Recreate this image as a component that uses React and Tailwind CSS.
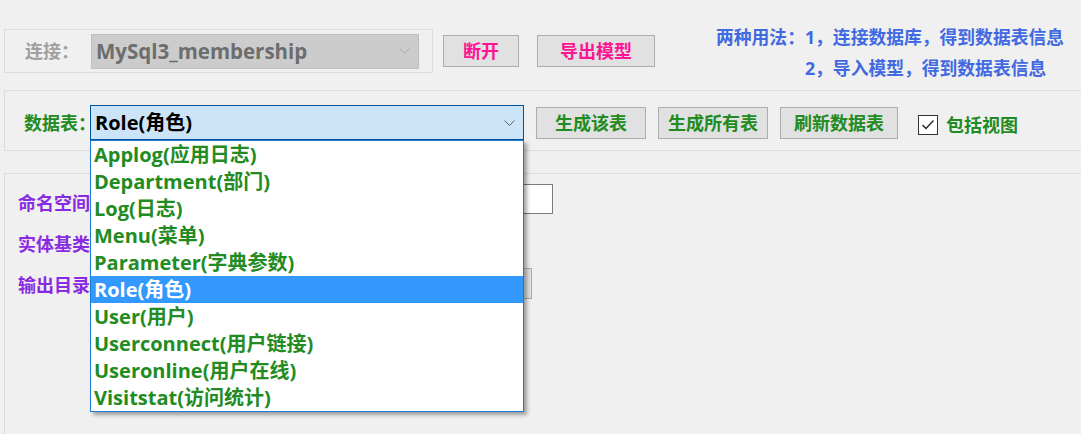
import React from 'react';

const tables = [
  'Applog(应用日志)',
  'Department(部门)',
  'Log(日志)',
  'Menu(菜单)',
  'Parameter(字典参数)',
  'Role(角色)',
  'User(用户)',
  'Userconnect(用户链接)',
  'Useronline(用户在线)',
  'Visitstat(访问统计)',
];

const Chevron = ({ color }) => (
  <svg width="11" height="6" viewBox="0 0 11 6" className="shrink-0">
    <polyline points="0.5,0.5 5.5,5.5 10.5,0.5" fill="none" stroke={color} strokeWidth="1" />
  </svg>
);

const WinButton = ({ label, width, color }) => (
  <button
    className={`${width} h-[32px] shrink-0 bg-[#e1e1e1] border border-[#adadad] flex items-center justify-center text-[18px] font-bold ${color}`}
  >
    {label}
  </button>
);

export default function App() {
  const selected = 'Role(角色)';

  return (
    <div className="w-[1081px] h-[434px] overflow-hidden bg-[#f0f0f0] font-bold font-['Open_Sans','Noto_Sans_CJK_SC',sans-serif] leading-none">
      {/* connection row */}
      <div className="h-[90px] flex items-start">
        <div className="ml-[4px] mt-[29px] w-[429px] h-[44px] shrink-0 border border-[#dcdcdc] flex items-center">
          <span className="ml-[20px] w-[66px] shrink-0 whitespace-nowrap text-[18px] text-[#a0a0a0]">连接：</span>
          <div className="w-[328px] h-[35px] shrink-0 bg-[#cccccc] border border-[#bfbfbf] flex items-center justify-between pl-[4px] pr-[8px]">
            <span className="text-[20.5px] text-[#6d6d6d]">MySql3_membership</span>
            <Chevron color="#a8a8a8" />
          </div>
        </div>
        <div className="ml-[10px] mt-[35px]">
          <WinButton label="断开" width="w-[76px]" color="text-[#ff1493]" />
        </div>
        <div className="ml-[18px] mt-[35px]">
          <WinButton label="导出模型" width="w-[118px]" color="text-[#ff1493]" />
        </div>
        <div className="ml-[61px] mt-[22px] text-[17.8px] leading-[31px] text-[#4169e1] whitespace-nowrap">
          <div>两种用法：1，连接数据库，得到数据表信息</div>
          <div>
            <span className="invisible">两种用法：</span>2，导入模型，得到数据表信息
          </div>
        </div>
      </div>

      {/* table row */}
      <div className="ml-[4px] w-[1100px] h-[61px] border border-[#dcdcdc]">
        <div className="mt-[14px] h-[35px] flex items-center">
          <span className="ml-[19px] w-[66px] shrink-0 whitespace-nowrap text-[18px] text-[#228b22]">数据表：</span>
          <div className="relative w-[434px] h-[35px] shrink-0">
            <div className="h-full bg-[#cce4f7] border border-[#005499] flex items-center justify-between pl-[4px] pr-[8px]">
              <span className="text-[20px] text-black">{selected}</span>
              <Chevron color="#606060" />
            </div>
            <ul className="absolute left-0 top-full z-10 w-full bg-white border border-[#1a7ad4] shadow-[3px_3px_4px_rgba(0,0,0,0.35)]">
              {tables.map((t) => (
                <li
                  key={t}
                  className={`h-[27px] pl-[3px] flex items-center text-[20px] ${
                    t === selected ? 'bg-[#3399ff] text-white' : 'text-[#228b22]'
                  }`}
                >
                  {t}
                </li>
              ))}
            </ul>
          </div>
          <div className="ml-[12px]">
            <WinButton label="生成该表" width="w-[110px]" color="text-[#228b22]" />
          </div>
          <div className="ml-[12px]">
            <WinButton label="生成所有表" width="w-[110px]" color="text-[#228b22]" />
          </div>
          <div className="ml-[12px]">
            <WinButton label="刷新数据表" width="w-[118px]" color="text-[#228b22]" />
          </div>
          <div className="ml-[20px] mt-[5px] w-[20px] h-[20px] shrink-0 bg-white border border-[#333333] flex items-center justify-center">
            <svg width="14" height="12" viewBox="0 0 14 12">
              <polyline points="1.5,6 5,9.5 12.5,1.5" fill="none" stroke="#222" strokeWidth="1.3" />
            </svg>
          </div>
          <span className="ml-[8px] mt-[5px] whitespace-nowrap text-[18px] text-[#228b22]">包括视图</span>
        </div>
      </div>

      {/* settings group */}
      <div className="ml-[4px] mt-[22px] w-[1100px] h-[300px] border border-[#dcdcdc]">
        <div className="mt-[10px] h-[30px] flex items-center">
          <span className="ml-[13px] w-[78px] shrink-0 mt-[7px] whitespace-nowrap text-[18px] text-[#8a2be2]">命名空间</span>
          <div className="w-[457px] h-[30px] shrink-0 bg-white border border-[#7a7a7a]" />
        </div>
        <div className="mt-[15px] h-[30px] flex items-center">
          <span className="ml-[13px] w-[78px] shrink-0 whitespace-nowrap text-[18px] text-[#8a2be2]">实体基类</span>
        </div>
        <div className="mt-[9px] h-[31px] flex items-center">
          <span className="ml-[13px] w-[78px] shrink-0 mt-[3px] whitespace-nowrap text-[18px] text-[#8a2be2]">输出目录</span>
          <div className="w-[436px] h-[31px] shrink-0 bg-[#e1e1e1] border border-[#adadad]" />
        </div>
      </div>
    </div>
  );
}
